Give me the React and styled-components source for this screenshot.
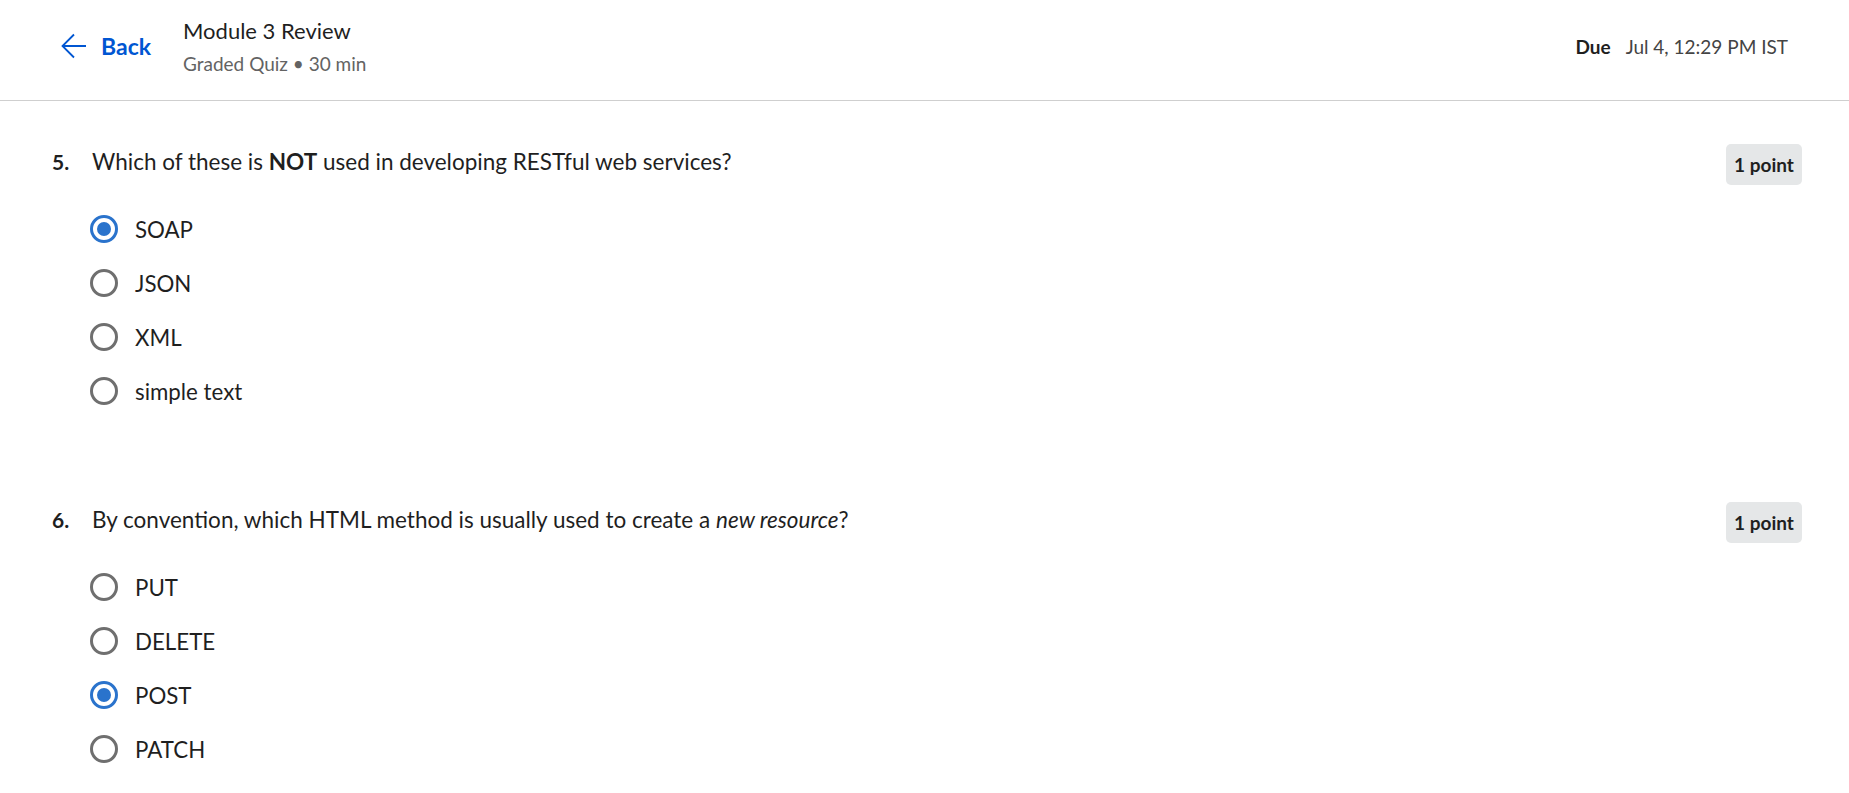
import React from 'react'
import styled, { createGlobalStyle } from 'styled-components'

const GlobalStyle = createGlobalStyle`
  body {
    margin: 0;
    background: #fff;
    font-family: 'Source Sans Pro', Lato, 'Liberation Sans', sans-serif;
    color: #1f1f1f;
  }
`

const questions = [
  {
    num: 5,
    text: (
      <>
        Which of these is <b>NOT</b> used in developing RESTful web services?
      </>
    ),
    options: ['SOAP', 'JSON', 'XML', 'simple text'],
    selected: 0,
  },
  {
    num: 6,
    text: (
      <>
        By convention, which HTML method is usually used to create a <i>new resource</i>?
      </>
    ),
    options: ['PUT', 'DELETE', 'POST', 'PATCH'],
    selected: 2,
  },
]

function App() {
  return (
    <>
      <GlobalStyle />
      <Header>
        <BackLink href="#">
          <svg width="26" height="26" viewBox="0 0 26 26" fill="none">
            <path
              d="M25 13H2M13 1.5L1.5 13L13 24.5"
              stroke="#0056d2"
              strokeWidth="1.8"
            />
          </svg>
          <span>Back</span>
        </BackLink>
        <TitleBlock>
          <Title>Module 3 Review</Title>
          <Subtitle>Graded Quiz • 30 min</Subtitle>
        </TitleBlock>
        <Due>
          <b>Due</b>
          <span>Jul 4, 12:29 PM IST</span>
        </Due>
      </Header>
      <Main>
        {questions.map((q) => (
          <Question key={q.num}>
            <QuestionRow>
              <Num>{q.num}.</Num>
              <QText>{q.text}</QText>
              <Badge>1 point</Badge>
            </QuestionRow>
            <Options>
              {q.options.map((o, i) => (
                <Option key={o}>
                  <Radio checked={i === q.selected} />
                  <span>{o}</span>
                </Option>
              ))}
            </Options>
          </Question>
        ))}
      </Main>
    </>
  )
}

export default App

const Header = styled.header`
  height: 100px;
  display: flex;
  align-items: center;
  padding: 0 61px 0 61px;
  border-bottom: 1px solid #cfcfcf;
  box-sizing: content-box;
`

const BackLink = styled.a`
  display: flex;
  align-items: center;
  gap: 14px;
  text-decoration: none;
  color: #0056d2;
  font-weight: 700;
  font-size: 23px;
  margin-right: 32px;
  margin-top: -8px;
`

const TitleBlock = styled.div`
  display: flex;
  flex-direction: column;
  gap: 8px;
  flex: 1;
  margin-top: -7px;
`

const Title = styled.div`
  font-size: 22px;
  line-height: 26px;
  color: #1f1f1f;
`

const Subtitle = styled.div`
  font-size: 19px;
  line-height: 23px;
  color: #636363;
`

const Due = styled.div`
  display: flex;
  gap: 15px;
  font-size: 19px;
  color: #444;
  margin-top: -8px;
  b {
    color: #1f1f1f;
  }
`

const Main = styled.main`
  padding: 43px 47px 0 52px;
`

const Question = styled.section`
  margin-bottom: 84px;
`

const QuestionRow = styled.div`
  display: flex;
  align-items: flex-start;
`

const Num = styled.span`
  width: 40px;
  font-weight: 700;
  font-size: 21px;
  line-height: 36px;
`

const QText = styled.p`
  flex: 1;
  margin: 0;
  font-size: 22.5px;
  line-height: 36px;
`

const Badge = styled.span`
  background: #e5e7e8;
  border-radius: 5px;
  font-weight: 700;
  font-size: 19px;
  height: 41px;
  width: 76px;
  display: flex;
  align-items: center;
  justify-content: center;
`

const Options = styled.div`
  margin: 17px 0 0 38px;
  display: flex;
  flex-direction: column;
`

const Option = styled.label`
  height: 54px;
  display: flex;
  align-items: center;
  gap: 17px;
  font-size: 22.3px;
`

const Radio = styled.span`
  width: 28px;
  height: 28px;
  box-sizing: border-box;
  border-radius: 50%;
  border: 3px solid ${(p) => (p.checked ? '#2a73cc' : '#6f6f6f')};
  display: flex;
  align-items: center;
  justify-content: center;
  &::after {
    content: '';
    width: 14px;
    height: 14px;
    border-radius: 50%;
    background: #2a73cc;
    display: ${(p) => (p.checked ? 'block' : 'none')};
  }
`
